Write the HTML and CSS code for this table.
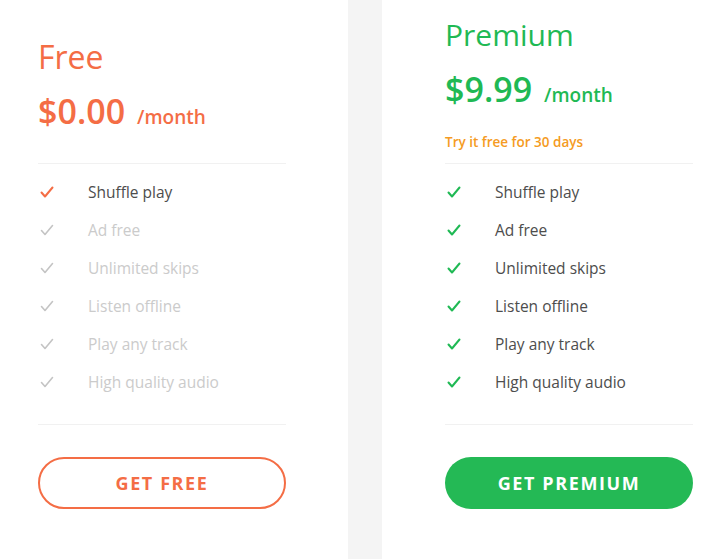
FILE: index.html
```html
<!DOCTYPE html>
<html lang="en">
<head>
    <meta charset="UTF-8">
    <meta name="viewport" content="width=device-width, initial-scale=1.0">
    <title>Plans</title>
    <link rel="stylesheet" href="styles.css">
</head>
<body>
    <div class="plans">
        <div class="plan plan-free">
            <div class="plan-head">
                <h2 class="plan-title">Free</h2>
                <div class="price"><span class="amount">$0.00</span><span class="period">/month</span></div>
            </div>
            <ul class="features">
                <li class="feature on">
                    <svg class="check" viewBox="0 0 14 12"><polyline points="1.5,6.5 5,10.5 12.5,1.5"/></svg>
                    Shuffle play
                </li>
                <li class="feature">
                    <svg class="check" viewBox="0 0 14 12"><polyline points="1.5,6.5 5,10.5 12.5,1.5"/></svg>
                    Ad free
                </li>
                <li class="feature">
                    <svg class="check" viewBox="0 0 14 12"><polyline points="1.5,6.5 5,10.5 12.5,1.5"/></svg>
                    Unlimited skips
                </li>
                <li class="feature">
                    <svg class="check" viewBox="0 0 14 12"><polyline points="1.5,6.5 5,10.5 12.5,1.5"/></svg>
                    Listen offline
                </li>
                <li class="feature">
                    <svg class="check" viewBox="0 0 14 12"><polyline points="1.5,6.5 5,10.5 12.5,1.5"/></svg>
                    Play any track
                </li>
                <li class="feature">
                    <svg class="check" viewBox="0 0 14 12"><polyline points="1.5,6.5 5,10.5 12.5,1.5"/></svg>
                    High quality audio
                </li>
            </ul>
            <button class="plan-button">GET FREE</button>
        </div>

        <div class="plan plan-premium">
            <div class="plan-head">
                <h2 class="plan-title">Premium</h2>
                <div class="price"><span class="amount">$9.99</span><span class="period">/month</span></div>
                <div class="trial">Try it free for 30 days</div>
            </div>
            <ul class="features">
                <li class="feature on">
                    <svg class="check" viewBox="0 0 14 12"><polyline points="1.5,6.5 5,10.5 12.5,1.5"/></svg>
                    Shuffle play
                </li>
                <li class="feature on">
                    <svg class="check" viewBox="0 0 14 12"><polyline points="1.5,6.5 5,10.5 12.5,1.5"/></svg>
                    Ad free
                </li>
                <li class="feature on">
                    <svg class="check" viewBox="0 0 14 12"><polyline points="1.5,6.5 5,10.5 12.5,1.5"/></svg>
                    Unlimited skips
                </li>
                <li class="feature on">
                    <svg class="check" viewBox="0 0 14 12"><polyline points="1.5,6.5 5,10.5 12.5,1.5"/></svg>
                    Listen offline
                </li>
                <li class="feature on">
                    <svg class="check" viewBox="0 0 14 12"><polyline points="1.5,6.5 5,10.5 12.5,1.5"/></svg>
                    Play any track
                </li>
                <li class="feature on">
                    <svg class="check" viewBox="0 0 14 12"><polyline points="1.5,6.5 5,10.5 12.5,1.5"/></svg>
                    High quality audio
                </li>
            </ul>
            <button class="plan-button">GET PREMIUM</button>
        </div>
    </div>
</body>
</html>
```

FILE: styles.css
```css
* {
    margin: 0;
    padding: 0;
    box-sizing: border-box;
}

body {
    background-color: #f4f4f4;
    font-family: "Open Sans", "Noto Sans", sans-serif;
    overflow: hidden;
}

.plans {
    display: flex;
    gap: 34px;
    height: 559px;
}

.plan {
    background-color: #fff;
    display: flex;
    flex-direction: column;
}

.plan-free {
    width: 348px;
    padding: 0 62px 0 38px;
    --accent: #f46d45;
}

.plan-premium {
    width: 339px;
    padding: 0 28px 0 63px;
    --accent: #1fb954;
}

.plan-head {
    height: 164px;
    border-bottom: 1px solid #f1f1f1;
    color: var(--accent);
}

.plan-free .plan-head {
    padding-top: 37px;
}

.plan-premium .plan-head {
    padding-top: 15px;
}

.plan-title {
    font-size: 30px;
    font-weight: 400;
    line-height: 40px;
}

.plan-free .plan-title {
    font-size: 32px;
}

.price {
    margin-top: 12px;
    line-height: 44px;
}

.amount {
    font-size: 34px;
    font-weight: 600;
}

.period {
    font-size: 19px;
    font-weight: 600;
    margin-left: 12px;
}

.trial {
    margin-top: 15px;
    font-size: 13.5px;
    font-weight: 600;
    line-height: 18px;
    color: #f59b23;
}

.features {
    list-style: none;
    padding: 9px 0 23px;
    border-bottom: 1px solid #f1f1f1;
}

.feature {
    display: flex;
    align-items: center;
    height: 38px;
    font-size: 15.5px;
    color: #cbcbcb;
}

.feature.on {
    color: #4d4d4d;
}

.check {
    width: 14px;
    height: 12px;
    margin: 0 34px 0 2px;
    fill: none;
    stroke: #c4c4c4;
    stroke-width: 1.6;
    stroke-linecap: round;
    stroke-linejoin: round;
}

.feature.on .check {
    stroke: var(--accent);
    stroke-width: 2;
}

.plan-button {
    margin-top: 32px;
    height: 52px;
    border-radius: 26px;
    font-family: inherit;
    font-size: 18px;
    font-weight: 700;
    letter-spacing: 1.6px;
    cursor: pointer;
}

.plan-free .plan-button {
    background-color: #fff;
    color: var(--accent);
    border: 2px solid var(--accent);
}

.plan-premium .plan-button {
    background-color: #24b955;
    color: #fff;
    border: none;
}
```
